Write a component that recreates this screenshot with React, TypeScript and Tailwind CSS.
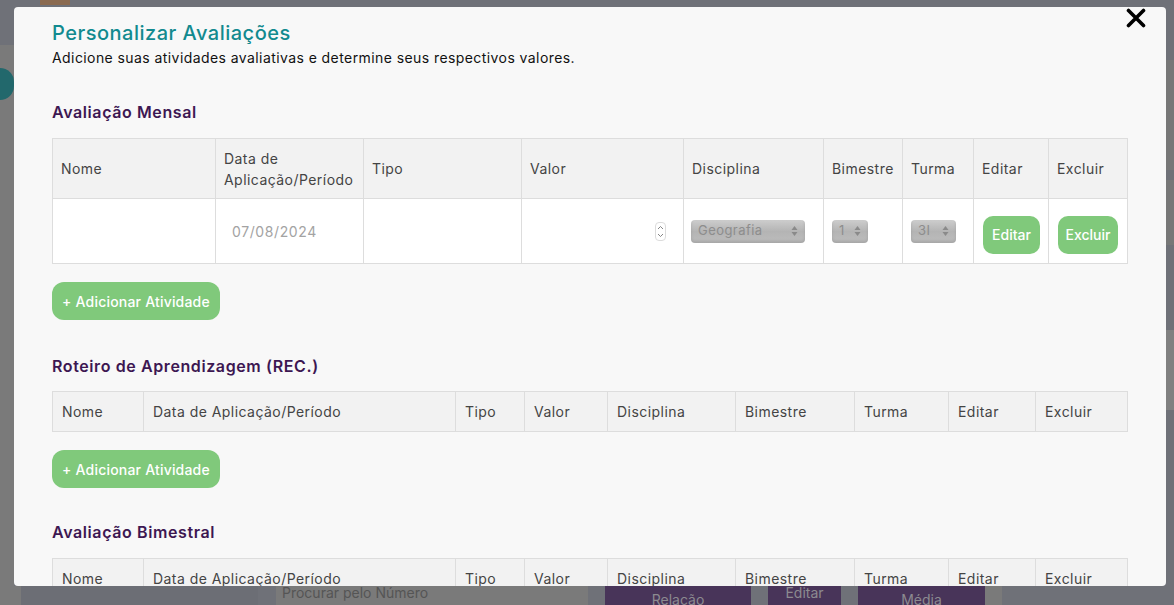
import { ReactNode } from "react";

const mensalCols = [
	{ label: "Nome", w: "w-[163px]" },
	{ label: "Data de Aplicação/Período", w: "w-[148px]" },
	{ label: "Tipo", w: "w-[158px]" },
	{ label: "Valor", w: "w-[162px]" },
	{ label: "Disciplina", w: "w-[140px]" },
	{ label: "Bimestre", w: "w-[79px]" },
	{ label: "Turma", w: "w-[71px]" },
	{ label: "Editar", w: "w-[75px]" },
	{ label: "Excluir", w: "w-[79px]" },
];

const wideCols = [
	{ label: "Nome", w: "w-[91px]" },
	{ label: "Data de Aplicação/Período", w: "w-[312px]" },
	{ label: "Tipo", w: "w-[69px]" },
	{ label: "Valor", w: "w-[83px]" },
	{ label: "Disciplina", w: "w-[128px]" },
	{ label: "Bimestre", w: "w-[119px]" },
	{ label: "Turma", w: "w-[94px]" },
	{ label: "Editar", w: "w-[87px]" },
	{ label: "Excluir", w: "w-[92px]" },
];

const SectionTitle = ({ children }: { children: ReactNode }) => (
	<h2 className="text-[16px] leading-6 font-semibold tracking-[0.6px] text-[#3d1752]">{children}</h2>
);

const AddButton = () => (
	<button className="h-[38px] w-[168px] rounded-[12px] bg-[#80c97b] text-[14px] font-medium tracking-[0.2px] text-white">
		+ Adicionar Atividade
	</button>
);

const FakeSelect = ({ value, w }: { value: string; w: string }) => (
	<div
		className={`${w} h-[23px] flex items-center justify-between px-[7px] rounded-[4px] bg-linear-to-b from-[#cdcdcd] via-[#b4b4b4] to-[#bdbdbd] shadow-[inset_0_-2px_3px_rgba(0,0,0,0.12)] text-[13px] text-[#8d8d8d]`}>
		<span>{value}</span>
		<svg width="7" height="12" viewBox="0 0 7 12">
			<path d="M3.5 1 L6.5 5 H0.5 Z" fill="#8a8a8a" />
			<path d="M3.5 11 L6.5 7 H0.5 Z" fill="#8a8a8a" />
		</svg>
	</div>
);

const GreenBtn = ({ label, w }: { label: string; w: string }) => (
	<button className={`${w} h-[38px] rounded-[10px] bg-[#80c97b] text-[14px] font-medium tracking-normal text-white`}>
		{label}
	</button>
);

const HeaderOnlyTable = () => (
	<table className="w-[1075px] table-fixed border-collapse">
		<colgroup>
			{wideCols.map((c) => (
				<col key={c.label} className={c.w} />
			))}
		</colgroup>
		<thead>
			<tr className="h-[40px] bg-[#f2f2f2]">
				{wideCols.map((c) => (
					<th
						key={c.label}
						className="border border-[#dddddd] px-[9px] text-left text-[14px] font-normal text-[#444444]">
						{c.label}
					</th>
				))}
			</tr>
		</thead>
	</table>
);

const App = () => {
	return (
		<div className="relative h-[605px] w-full overflow-hidden bg-[#6f7178] font-[Inter,'Open_Sans',sans-serif]">
			{/* page behind the overlay */}
			<div className="flex h-full flex-col">
				<div className="flex h-[45px]">
					<div className="ml-[40px] mt-0 h-[5px] w-[30px] bg-[#8a6a50]" />
				</div>
				<div className="flex flex-1">
					<div className="flex w-[14px] flex-col bg-[#7a7a7a]">
						<div className="mt-[23px] h-[32px] w-[14px] rounded-r-full bg-[#22686c]" />
					</div>
					<div className="flex-1" />
					<div className="flex w-[8px] flex-col">
						<div className="mt-[15px] h-[110px] bg-[#777777]" />
						<div className="mt-[10px] h-[65px] bg-[#777777]" />
						<div className="mt-[85px] h-[80px] bg-[#808080]" />
					</div>
				</div>
				<div className="flex h-[19px] text-[14px] text-[#8c8a90]">
					<div className="w-[21px] bg-[#7a7a7a]" />
					<div className="w-[237px] bg-[#6c6e75]" />
					<div className="w-[18px]" />
					<div className="w-[312px] bg-[#7a7a7a] pl-[6px] leading-[14px] text-[#555555]">
						Procurar pelo Número
					</div>
					<div className="w-[17px]" />
					<div className="w-[146px] bg-[#483459] pt-[6px] text-center leading-[16px]">Relação</div>
					<div className="w-[17px]" />
					<div className="w-[73px] bg-[#483459] text-center leading-[14px]">Editar</div>
					<div className="w-[17px]" />
					<div className="w-[127px] bg-[#483459] pt-[6px] text-center leading-[16px]">Média</div>
					<div className="w-[17px] bg-[#7a7a7a]" />
				</div>
			</div>

			{/* modal */}
			<div className="absolute left-[14px] top-[7px] h-[579px] w-[1152px] overflow-hidden rounded-[4px] bg-[#f8f8f8] tracking-[0.45px]">
				<button className="absolute right-[19px] top-0 p-[1px]">
					<svg width="20" height="20" viewBox="0 0 20 20">
						<path d="M2.5 2.5 L17.5 17.5 M17.5 2.5 L2.5 17.5" stroke="#000" strokeWidth="3.6" strokeLinecap="round" />
					</svg>
				</button>

				<div className="flex flex-col pl-[38px] pt-[12px]">
					<h1 className="text-[20px] leading-7 font-medium tracking-[0.5px] text-[#128a8f]">Personalizar Avaliações</h1>
					<p className="mt-[1px] text-[14px] leading-5 tracking-[0.42px] text-[#111111]">
						Adicione suas atividades avaliativas e determine seus respectivos valores.
					</p>

					<div className="mt-[32px]">
						<SectionTitle>Avaliação Mensal</SectionTitle>
					</div>
					<table className="mt-[14px] w-[1075px] table-fixed border-collapse">
						<colgroup>
							{mensalCols.map((c) => (
								<col key={c.label} className={c.w} />
							))}
						</colgroup>
						<thead>
							<tr className="h-[60px] bg-[#f2f2f2]">
								{mensalCols.map((c) => (
									<th
										key={c.label}
										className="border border-[#dddddd] px-[8px] text-left text-[14px] leading-[21px] font-normal text-[#444444]">
										{c.label}
									</th>
								))}
							</tr>
						</thead>
						<tbody>
							<tr className="h-[65px] bg-white">
								<td className="border border-[#dddddd]" />
								<td className="border border-[#dddddd] pl-[16px] text-[14px] tracking-[0.6px] text-[#a3a3a3]">
									07/08/2024
								</td>
								<td className="border border-[#dddddd]" />
								<td className="border border-[#dddddd]">
									<div className="flex justify-end pr-[17px]">
										<div className="flex h-[19px] w-[11px] flex-col items-center justify-center rounded-[4px] border border-[#dcdcdc] bg-white">
											<svg width="7" height="13" viewBox="0 0 7 13">
												<path d="M1 4 L3.5 1.5 L6 4 M1 9 L3.5 11.5 L6 9" stroke="#777" strokeWidth="0.9" fill="none" />
											</svg>
										</div>
									</div>
								</td>
								<td className="border border-[#dddddd] pl-[7px]">
									<FakeSelect value="Geografia" w="w-[114px]" />
								</td>
								<td className="border border-[#dddddd] pl-[8px]">
									<FakeSelect value="1" w="w-[36px]" />
								</td>
								<td className="border border-[#dddddd] pl-[8px]">
									<FakeSelect value="3I" w="w-[45px]" />
								</td>
								<td className="border border-[#dddddd] pl-[9px] pt-[7px]">
									<GreenBtn label="Editar" w="w-[57px]" />
								</td>
								<td className="border border-[#dddddd] pl-[9px] pt-[7px]">
									<GreenBtn label="Excluir" w="w-[60px]" />
								</td>
							</tr>
						</tbody>
					</table>
					<div className="mt-[18px]">
						<AddButton />
					</div>

					<div className="mt-[34px]">
						<SectionTitle>Roteiro de Aprendizagem (REC.)</SectionTitle>
					</div>
					<div className="mt-[13px]">
						<HeaderOnlyTable />
					</div>
					<div className="mt-[18px]">
						<AddButton />
					</div>

					<div className="mt-[32px]">
						<SectionTitle>Avaliação Bimestral</SectionTitle>
					</div>
					<div className="mt-[14px]">
						<HeaderOnlyTable />
					</div>
				</div>
			</div>
		</div>
	);
};

export default App;
